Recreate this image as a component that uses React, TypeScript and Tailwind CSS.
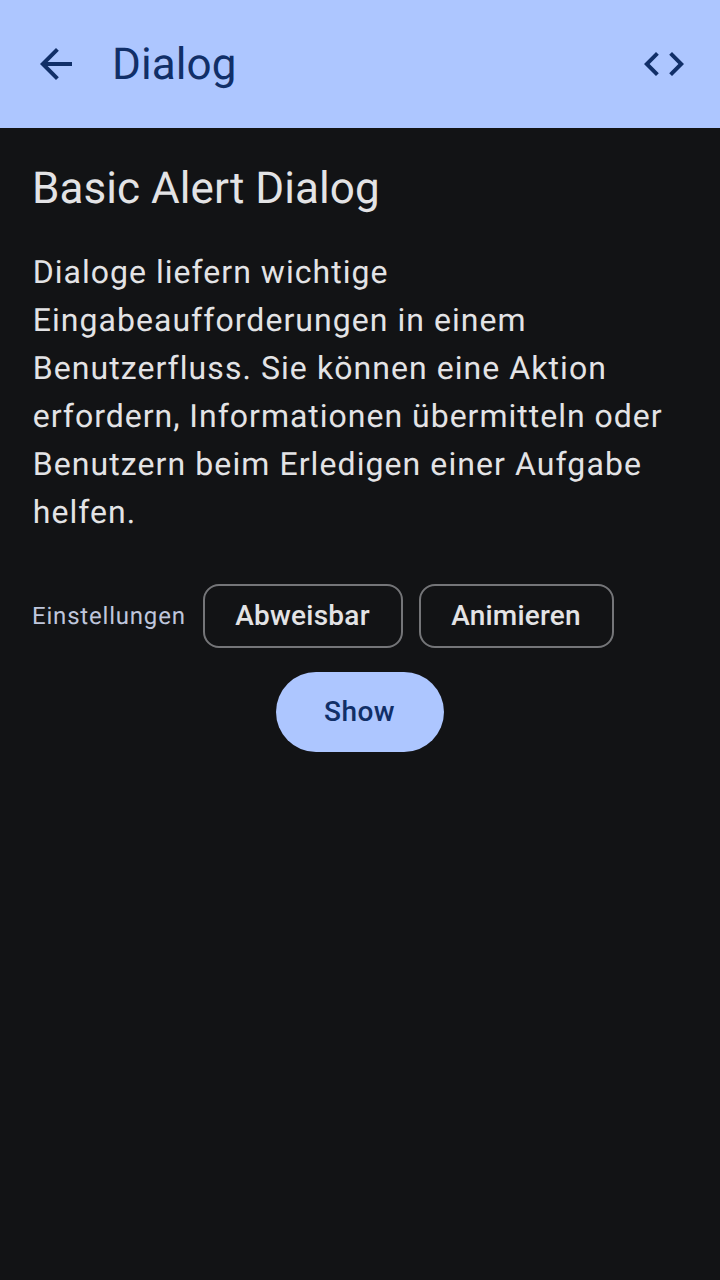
export default function App() {
  return (
    <div className="flex h-[1280px] w-[720px] flex-col bg-[#121315] font-['Roboto',sans-serif] text-[#e3e3e5] [text-rendering:geometricPrecision]">
      <header className="flex h-32 items-center bg-[#adc6ff] px-8 text-[#112f68]">
        <button className="flex size-12 items-center justify-center" aria-label="Zurück">
          <svg className="size-12" viewBox="0 0 24 24" fill="currentColor">
            <path d="M20 11H7.83l5.59-5.59L12 4l-8 8 8 8 1.41-1.41L7.83 13H20v-2z" />
          </svg>
        </button>
        <h1 className="ml-8 flex-1 text-[44px] leading-[56px] tracking-[0.1px]">Dialog</h1>
        <button className="flex size-12 items-center justify-center" aria-label="Code">
          <svg className="size-12" viewBox="0 0 24 24" fill="currentColor">
            <path d="M9.4 16.6L4.8 12l4.6-4.6L8 6l-6 6 6 6 1.4-1.4zm5.2 0l4.6-4.6-4.6-4.6L16 6l6 6-6 6-1.4-1.4z" />
          </svg>
        </button>
      </header>
      <main className="flex flex-col px-8 pt-8">
        <h2 className="text-[44px] leading-[56px] tracking-[0.05px]">Basic Alert Dialog</h2>
        <p className="mt-8 pl-[0.75px] text-[32px] leading-[48px] whitespace-nowrap">
          <span className="block tracking-[1.02px]">Dialoge liefern wichtige</span>
          <span className="block tracking-[1.04px]">Eingabeaufforderungen in einem</span>
          <span className="block tracking-[1.06px]">Benutzerfluss. Sie können eine Aktion</span>
          <span className="block tracking-[0.99px]">erfordern, Informationen übermitteln oder</span>
          <span className="block tracking-[1.08px]">Benutzern beim Erledigen einer Aufgabe</span>
          <span className="block tracking-[1.04px]">helfen.</span>
        </p>
        <div className="mt-12 flex h-16 items-center">
          <span className="w-[171px] text-[24px] leading-8 tracking-[0.8px] text-[#bfc6dc]">Einstellungen</span>
          <button className="h-16 w-[200px] rounded-2xl border-2 border-[#747578] pr-px text-[28px] leading-10 font-medium tracking-[0.25px]">Abweisbar</button>
          <button className="ml-4 h-16 w-[195px] rounded-2xl border-2 border-[#747578] pr-px text-[28px] leading-10 font-medium tracking-[0.2px]">Animieren</button>
        </div>
        <button className="mt-6 h-20 w-[168px] self-center rounded-full bg-[#adc6ff] pr-px text-[28px] leading-10 font-medium tracking-[0.4px] text-[#112f68]">Show</button>
      </main>
    </div>
  );
}
